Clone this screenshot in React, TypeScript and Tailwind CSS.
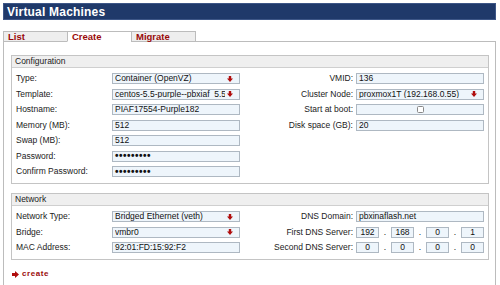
import React from "react";

type Field = { label: string; kind: "text" | "select" | "check" | "ip"; value?: string; ip?: string[] };
type Row = { left?: Field; right?: Field };

const DownArrow = () => (
  <svg width="6" height="6" viewBox="0 0 6 6" className="shrink-0">
    <polygon points="1.8,0 4.2,0 4.2,2.4 6,2.4 3,6 0,2.4 1.8,2.4" fill="#b00d0d" />
  </svg>
);

const RightArrow = () => (
  <svg width="7" height="7" viewBox="0 0 7 7" className="shrink-0">
    <polygon points="0,2 3,2 3,0 7,3.5 3,7 3,5 0,5" fill="#b00d0d" />
  </svg>
);

const box = "h-[11px] border border-[#aeb8c2] bg-[#eef5fb] text-[#111]";

const Input = ({ f }: { f: Field }) => {
  if (f.kind === "select")
    return (
      <div className={`${box} w-[128px] flex items-center pl-[2px] pr-[6px] gap-[2px]`}>
        <span className="flex-1 overflow-hidden whitespace-nowrap leading-none">{f.value}</span>
        <DownArrow />
      </div>
    );
  if (f.kind === "check")
    return (
      <div className={`${box} w-[128px] flex items-center justify-center`}>
        <span className="w-[7px] h-[7px] rounded-[1.5px] border border-[#888] bg-white" />
      </div>
    );
  if (f.kind === "ip")
    return (
      <div className="w-[128px] flex items-center justify-between">
        {f.ip!.map((v, i) => (
          <React.Fragment key={i}>
            {i > 0 && <span className="leading-none text-[#111]">.</span>}
            <div className={`${box} w-[23px] flex items-center justify-center leading-none`}>{v}</div>
          </React.Fragment>
        ))}
      </div>
    );
  const pw = f.label.includes("Password");
  return (
    <div className={`${box} w-[128px] flex items-center pl-[2px] leading-none whitespace-nowrap overflow-hidden`}>
      {pw ? <span className="text-[10px] tracking-[0.5px] font-bold">•••••••••</span> : f.value}
    </div>
  );
};

const Fieldset = ({ title, rows }: { title: string; rows: Row[] }) => (
  <div className="border border-[#c4c4c4]">
    <div className="h-[12px] bg-[#efefef] border-b border-[#cfcfcf] pl-[3px] flex items-center leading-none text-[#222]">
      {title}
    </div>
    <div className="flex flex-col gap-[4.5px] pt-[5px] pb-[6px] pl-[4px] pr-[4px]">
      {rows.map((r, i) => (
        <div key={i} className="grid grid-cols-[96px_128px_1fr_128px] items-center h-[11px]">
          <span className="leading-none text-[#222]">{r.left ? r.left.label : ""}</span>
          {r.left ? <Input f={r.left} /> : <span />}
          <span className="leading-none text-right pr-[3px] text-[#222]">{r.right ? r.right.label : ""}</span>
          {r.right ? <Input f={r.right} /> : <span />}
        </div>
      ))}
    </div>
  </div>
);

const configRows: Row[] = [
  { left: { label: "Type:", kind: "select", value: "Container (OpenVZ)" }, right: { label: "VMID:", kind: "text", value: "136" } },
  { left: { label: "Template:", kind: "select", value: "centos-5.5-purple--pbxiaf_5.5" }, right: { label: "Cluster Node:", kind: "select", value: "proxmox1T (192.168.0.55)" } },
  { left: { label: "Hostname:", kind: "text", value: "PIAF17554-Purple182" }, right: { label: "Start at boot:", kind: "check" } },
  { left: { label: "Memory (MB):", kind: "text", value: "512" }, right: { label: "Disk space (GB):", kind: "text", value: "20" } },
  { left: { label: "Swap (MB):", kind: "text", value: "512" } },
  { left: { label: "Password:", kind: "text", value: "" } },
  { left: { label: "Confirm Password:", kind: "text", value: "" } },
];

const networkRows: Row[] = [
  { left: { label: "Network Type:", kind: "select", value: "Bridged Ethernet (veth)" }, right: { label: "DNS Domain:", kind: "text", value: "pbxinaflash.net" } },
  { left: { label: "Bridge:", kind: "select", value: "vmbr0" }, right: { label: "First DNS Server:", kind: "ip", ip: ["192", "168", "0", "1"] } },
  { left: { label: "MAC Address:", kind: "text", value: "92:01:FD:15:92:F2" }, right: { label: "Second DNS Server:", kind: "ip", ip: ["0", "0", "0", "0"] } },
];

const tabs = ["List", "Create", "Migrate"];

export default function App() {
  return (
    <div className="w-[500px] h-[285px] overflow-hidden bg-white pt-[3px] pl-[3px] font-['Liberation_Sans',Arial,sans-serif] text-[8.5px]">
      <div className="w-[493px] flex flex-col">
        {/* title bar */}
        <div className="h-[17px] bg-[#1f396a] border border-[#3d5687] flex items-center pl-[3px] text-white font-bold text-[12px] tracking-[0.2px]">
          Virtual Machines
        </div>

        {/* tabs */}
        <div className="flex mt-[11px] -mb-px relative z-10">
          {tabs.map((t, i) => (
            <div
              key={t}
              className={`w-[65px] h-[11px] border border-[#bcbcbc] pl-[4px] flex items-center font-bold text-[9.5px] leading-none text-[#9a0a0a] ${
                i > 0 ? "-ml-px" : ""
              } ${t === "Create" ? "bg-white border-b-white" : "bg-[#eeeeee]"}`}
            >
              {t}
            </div>
          ))}
        </div>

        {/* content */}
        <div className="border border-b-0 border-[#bcbcbc] h-[260px] pt-[13px] pl-[7px] pr-[6px] flex flex-col">
          <Fieldset title="Configuration" rows={configRows} />
          <div className="mt-[9px]">
            <Fieldset title="Network" rows={networkRows} />
          </div>
          <div className="flex items-center gap-[3px] mt-[10px] pl-[1px]">
            <RightArrow />
            <span className="font-bold text-[8px] tracking-[0.6px] text-[#9a0a0a] leading-none">create</span>
          </div>
        </div>
      </div>
    </div>
  );
}
